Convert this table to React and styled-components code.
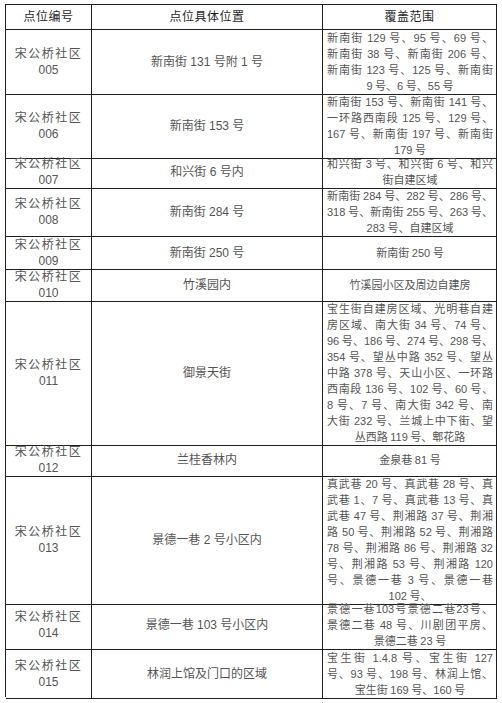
import styled, { createGlobalStyle } from "styled-components";

const Global = createGlobalStyle`
  html, body {
    margin: 0;
    padding: 0;
    background: #fff;
  }
  body {
    font-family: "Liberation Sans", "Noto Sans CJK SC", sans-serif;
  }
`;

const rows = [
  {
    h: 64,
    id: "005",
    place: "新南街 131 号附 1 号",
    cover: ["新南街 129 号、95 号、69 号、", "新南街 38 号、新南街 206 号、", "新南街 123 号、125 号、新南街", "9 号、6 号、55 号"],
  },
  {
    h: 62,
    id: "006",
    place: "新南街 153 号",
    cover: ["新南街 153 号、新南街 141 号、", "一环路西南段 125 号、129 号、", "167 号、新南街 197 号、新南街", "179 号"],
  },
  {
    h: 32,
    id: "007",
    place: "和兴街 6 号内",
    cover: ["和兴街 3 号、和兴街 6 号、和兴", "街自建区域"],
  },
  {
    h: 49,
    id: "008",
    place: "新南街 284 号",
    cover: ["新南街 284 号、282 号、286 号、", "318 号、新南街 255 号、263 号、", "283 号、自建区域"],
  },
  { h: 32, id: "009", place: "新南街 250 号", cover: ["新南街 250 号"] },
  { h: 32, id: "010", place: "竹溪园内", cover: ["竹溪园小区及周边自建房"] },
  {
    h: 143,
    id: "011",
    place: "御景天街",
    cover: [
      "宝生街自建房区域、光明巷自建",
      "房区域、南大街 34 号、74 号、",
      "96 号、186 号、274 号、298 号、",
      "354 号、望丛中路 352 号、望丛",
      "中路 378 号、天山小区、一环路",
      "西南段 136 号、102 号、60 号、",
      "8 号、7 号、南大街 342 号、南",
      "大街 232 号、兰城上中下街、望",
      "丛西路 119 号、郫花路",
    ],
  },
  { h: 32, id: "012", place: "兰桂香林内", cover: ["金泉巷 81 号"] },
  {
    h: 125,
    id: "013",
    place: "景德一巷 2 号小区内",
    cover: [
      "真武巷 20 号、真武巷 28 号、真",
      "武巷 1、7 号、真武巷 13 号、真",
      "武巷 47 号、荆湘路 37 号、荆湘",
      "路 50 号、荆湘路 52 号、荆湘路",
      "78 号、荆湘路 86 号、荆湘路 32",
      "号、荆湘路 53 号、荆湘路 120",
      "号、景德一巷 3 号、景德一巷",
      "102 号、",
    ],
  },
  {
    h: 49,
    id: "014",
    place: "景德一巷 103 号小区内",
    cover: ["景德一巷103号景德二巷23号、", "景德二巷 48 号、川剧团平房、", "景德二巷 23 号"],
  },
  {
    h: 47,
    id: "015",
    place: "林润上馆及门口的区域",
    cover: ["宝生街 1.4.8 号、宝生街 127", "号、93 号、198 号、林润上馆、", "宝生街 169 号、160 号"],
  },
];

export default function App() {
  return (
    <Page>
      <Global />
      <Table>
        <Row $h={25}>
          <HeadCell>点位编号</HeadCell>
          <HeadCell>点位具体位置</HeadCell>
          <HeadCell>覆盖范围</HeadCell>
        </Row>
        {rows.map((r) => (
          <Row key={r.id} $h={r.h}>
            <Cell>
              <Community>宋公桥社区</Community>
              <Line>{r.id}</Line>
            </Cell>
            <Cell>
              <Line>{r.place}</Line>
            </Cell>
            <CoverCell>
              {r.cover.map((t, i) => (
                <CoverLine key={i} $last={i === r.cover.length - 1}>
                  {t}
                </CoverLine>
              ))}
            </CoverCell>
          </Row>
        ))}
      </Table>
    </Page>
  );
}

const Page = styled.div`
  padding: 4px 5px 7px 5px;
  width: 502px;
  box-sizing: border-box;
`;

const Table = styled.div`
  width: 492px;
  border-top: 1px solid #1e1e1e;
  border-left: 1px solid #1e1e1e;
  box-sizing: border-box;
`;

const Row = styled.div`
  display: grid;
  grid-template-columns: 86px 231px 174px;
  height: ${(p) => p.$h}px;
`;

const Cell = styled.div`
  border-right: 1px solid #1e1e1e;
  border-bottom: 1px solid #1e1e1e;
  box-sizing: border-box;
  display: flex;
  flex-direction: column;
  align-items: center;
  justify-content: center;
  font-size: 12px;
  line-height: 16px;
  color: #555;
  overflow: visible;
`;

const HeadCell = styled(Cell)`
  color: #1f1f1f;
  letter-spacing: 0.5px;
`;

const CoverCell = styled(Cell)`
  align-items: stretch;
  padding: 0 3px 0 4px;
  font-size: 11px;
  word-spacing: -0.5px;
`;

const Line = styled.div`
  text-align: center;
  white-space: nowrap;
`;

const Community = styled(Line)`
  letter-spacing: 1.5px;
`;

const CoverLine = styled.div`
  white-space: nowrap;
  text-align: ${(p) => (p.$last ? "center" : "justify")};
  text-align-last: ${(p) => (p.$last ? "center" : "justify")};
`;
